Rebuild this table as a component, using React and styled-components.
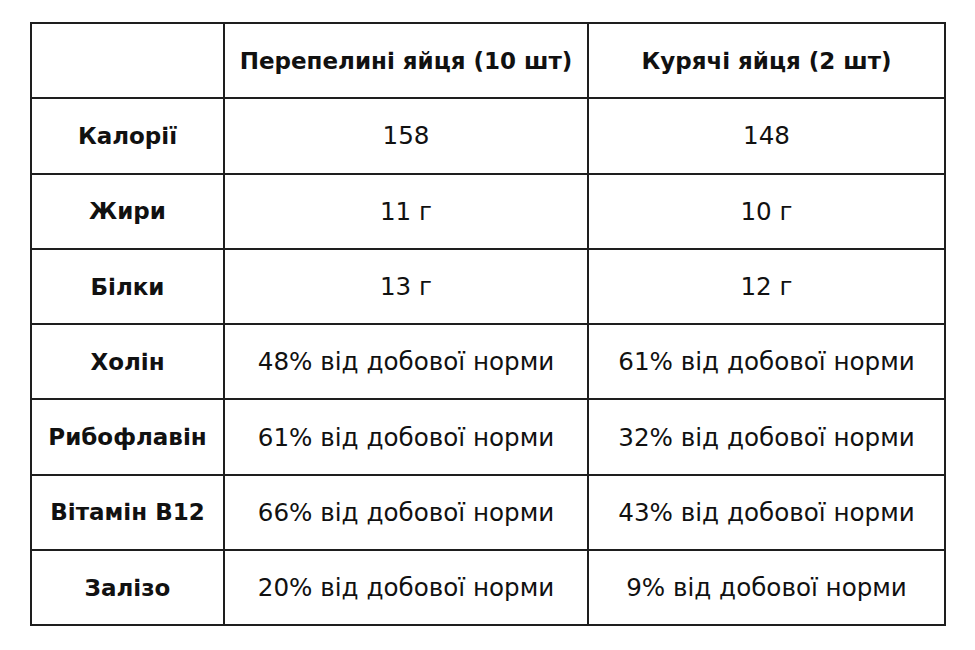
import React from "react";
import styled, { createGlobalStyle } from "styled-components";

const Global = createGlobalStyle`
  html, body { margin: 0; padding: 0; background: #fff; }
  body { font-family: "DejaVu Sans", "Noto Sans", sans-serif; color: #111; }
`;

const Page = styled.div`
  padding: 22px 0 0 30px;
`;

const Table = styled.table`
  border-collapse: collapse;
  table-layout: fixed;
  width: 914px;
`;

const Cell = styled.td`
  border: 2px solid #1e1e1e;
  height: 73.3px;
  padding: 0;
  text-align: center;
  vertical-align: middle;
  font-size: ${(p) => (p.$bold ? "23px" : "24.6px")};
  font-weight: ${(p) => (p.$bold ? 700 : 400)};
  color: #111;
  white-space: nowrap;
`;

const rows = [
  ["Калорії", "158", "148"],
  ["Жири", "11 г", "10 г"],
  ["Білки", "13 г", "12 г"],
  ["Холін", "48% від добової норми", "61% від добової норми"],
  ["Рибофлавін", "61% від добової норми", "32% від добової норми"],
  ["Вітамін B12", "66% від добової норми", "43% від добової норми"],
  ["Залізо", "20% від добової норми", "9% від добової норми"],
];

export default function App() {
  return (
    <Page>
      <Global />
      <Table>
        <colgroup>
          <col style={{ width: 193 }} />
          <col style={{ width: 364 }} />
          <col style={{ width: 357 }} />
        </colgroup>
        <tbody>
          <tr>
            <Cell />
            <Cell $bold>Перепелині яйця (10 шт)</Cell>
            <Cell $bold>Курячі яйця (2 шт)</Cell>
          </tr>
          {rows.map((r) => (
            <tr key={r[0]}>
              <Cell $bold>{r[0]}</Cell>
              <Cell>{r[1]}</Cell>
              <Cell>{r[2]}</Cell>
            </tr>
          ))}
        </tbody>
      </Table>
    </Page>
  );
}
